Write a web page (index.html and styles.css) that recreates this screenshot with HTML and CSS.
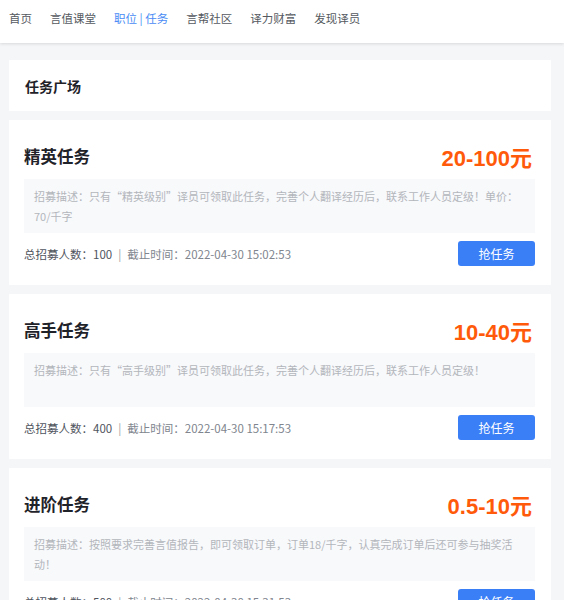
FILE: index.html
```html
<!DOCTYPE html>
<html lang="zh-CN">
<head>
<meta charset="utf-8">
<title>任务广场</title>
<link rel="stylesheet" href="styles.css">
</head>
<body>
<header class="header">
  <nav class="nav">
    <a class="nav-item">首页</a>
    <a class="nav-item">言值课堂</a>
    <a class="nav-item active">职位 | 任务</a>
    <a class="nav-item">言帮社区</a>
    <a class="nav-item">译力财富</a>
    <a class="nav-item">发现译员</a>
  </nav>
</header>
<main class="main">
  <section class="panel">任务广场</section>

  <section class="card">
    <div class="card-head">
      <h2 class="card-title">精英任务</h2>
      <div class="price">20-100元</div>
    </div>
    <div class="desc">招募描述：只有“精英级别”译员可领取此任务，完善个人翻译经历后，联系工作人员定级！单价：70/千字</div>
    <div class="card-foot">
      <div class="meta"><span class="meta-main">总招募人数：100</span><span class="sep">|</span><span class="meta-sub">截止时间：2022-04-30 15:02:53</span></div>
      <button class="btn">抢任务</button>
    </div>
  </section>

  <section class="card">
    <div class="card-head">
      <h2 class="card-title">高手任务</h2>
      <div class="price">10-40元</div>
    </div>
    <div class="desc">招募描述：只有“高手级别”译员可领取此任务，完善个人翻译经历后，联系工作人员定级！</div>
    <div class="card-foot">
      <div class="meta"><span class="meta-main">总招募人数：400</span><span class="sep">|</span><span class="meta-sub">截止时间：2022-04-30 15:17:53</span></div>
      <button class="btn">抢任务</button>
    </div>
  </section>

  <section class="card">
    <div class="card-head">
      <h2 class="card-title">进阶任务</h2>
      <div class="price">0.5-10元</div>
    </div>
    <div class="desc">招募描述：按照要求完善言值报告，即可领取订单，订单18/千字，认真完成订单后还可参与抽奖活动！</div>
    <div class="card-foot">
      <div class="meta"><span class="meta-main">总招募人数：500</span><span class="sep">|</span><span class="meta-sub">截止时间：2022-04-30 15:31:53</span></div>
      <button class="btn">抢任务</button>
    </div>
  </section>
</main>
</body>
</html>
```
FILE: styles.css
```css
* { box-sizing: border-box; }
html, body { margin: 0; padding: 0; }
body {
  background: #f5f6f8;
  font-family: "Noto Sans CJK SC", "Noto Sans", sans-serif;
  color: #333;
}
.header {
  height: 43px;
  background: #fff;
  box-shadow: 0 1px 3px rgba(0, 0, 0, 0.12);
  display: flex;
  align-items: center;
  position: relative;
  z-index: 1;
}
.nav {
  display: flex;
  align-items: center;
  gap: 18px;
  padding-left: 9px;
  margin-top: -7px;
}
.nav-item {
  font-size: 11.5px;
  color: #555a61;
  white-space: nowrap;
}
.nav-item.active { color: #4a8cf5; }
.main {
  padding: 17px 13px 0 9px;
}
.panel {
  height: 51px;
  background: #fff;
  display: flex;
  align-items: center;
  padding-left: 16px;
  font-size: 14px;
  font-weight: 700;
  color: #1f2329;
}
.card {
  margin-top: 9px;
  background: #fff;
  padding: 20px 16px 19px 15px;
}
.card-head {
  height: 32px;
  display: flex;
  align-items: center;
  justify-content: space-between;
  margin-bottom: 7px;
}
.card-title {
  margin: 0;
  font-size: 16.5px;
  font-weight: 700;
  color: #1f2329;
}
.price {
  font-family: "Liberation Sans", "Noto Sans CJK SC", sans-serif;
  font-size: 22px;
  font-weight: 700;
  color: #ff5a0a;
  padding-right: 3px;
}
.desc {
  min-height: 54px;
  background: #f8f9fb;
  padding: 7px 10px;
  font-size: 11px;
  line-height: 20px;
  color: #b3b6bc;
}
.card-foot {
  margin-top: 8px;
  display: flex;
  align-items: center;
  justify-content: space-between;
}
.meta {
  font-size: 11.5px;
  display: flex;
  align-items: center;
}
.meta-main { color: #50555e; }
.sep { color: #9a9ea6; margin: 0 6px; }
.meta-sub { color: #80858e; }
.btn {
  width: 77px;
  height: 25px;
  border: 0;
  border-radius: 3px;
  background: #3b7ff7;
  color: #fff;
  font-family: "Noto Sans CJK SC", sans-serif;
  font-size: 12px;
  padding: 0;
}
```
